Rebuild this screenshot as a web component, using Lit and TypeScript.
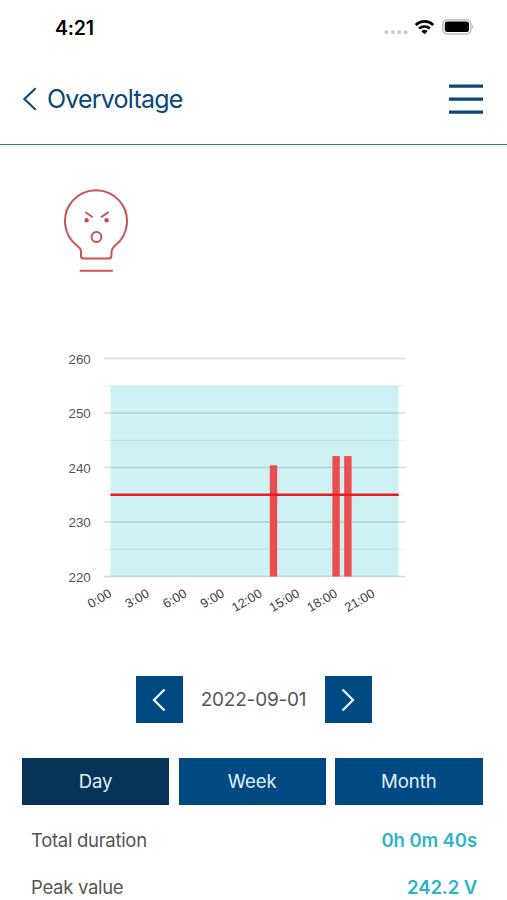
import { LitElement, html, svg, css } from "lit";
import { customElement, state } from "lit/decorators.js";
import { classMap } from "lit/directives/class-map.js";

const yOf = (v: number) => 18.5 + (260 - v) * 5.45;

@customElement("status-bar")
class StatusBar extends LitElement {
  static styles = css`
    :host { display: flex; flex: none; height: 54px; box-sizing: border-box; justify-content: space-between; align-items: center; padding: 0 32px 0 55px; }
    .time { font-size: 19.5px; font-weight: 600; line-height: 24px; letter-spacing: -0.2px; color: #000; padding-top: 1px; }
    svg { display: block; }
  `;
  render() {
    return html`
      <span class="time">4:21</span>
      <svg width="92" height="24" viewBox="0 0 92 24">
        <g fill="#cfcfcf">
          <rect x="1.5" y="15.2" width="4" height="4" rx="1.4" /><rect x="8" y="15.2" width="4" height="4" rx="1.4" />
          <rect x="14.2" y="15.2" width="4" height="4" rx="1.4" /><rect x="20.6" y="15.2" width="4" height="4" rx="1.4" />
        </g>
        <g fill="none" stroke="#000" stroke-width="2.7">
          <path d="M32.7 9.9a13 13 0 0 1 17.6 0" />
          <path d="M36.1 13.6a8 8 0 0 1 10.8 0" />
        </g>
        <path d="M38.4 16.2a4.6 4.6 0 0 1 6.2 0L41.5 19.2z" fill="#000" />
        <rect x="59.8" y="4.7" width="28.2" height="14.2" rx="4.5" fill="#fff" stroke="#bcbcbc" stroke-width="1.5" />
        <rect x="61.8" y="6.5" width="24.2" height="10.6" rx="2.4" fill="#000" />
        <path d="M89.3 9.8q2 2 0 4z" fill="#aaa" />
      </svg>
    `;
  }
}

@customElement("voltage-chart")
class VoltageChart extends LitElement {
  static styles = css`
    :host { display: block; flex: none; }
    svg { display: block; font-family: "Liberation Sans", Arial, sans-serif; font-size: 13.4px; fill: #555; }
    .hour { font-size: 12.9px; fill: #3c3c3c; }
  `;
  render() {
    const hours = ["0:00", "3:00", "6:00", "9:00", "12:00", "15:00", "18:00", "21:00"];
    const bars = [
      { x: 269.8, v: 240.4 },
      { x: 332.4, v: 242.1 },
      { x: 344.2, v: 242.1 },
    ];
    return html`
      <svg width="507" height="280" viewBox="0 0 507 280">
        <rect x="110.5" y=${yOf(255)} width="288.2" height=${yOf(220) - yOf(255)} fill="#cef1f3" />
        ${[260, 250, 240, 230, 220].map(
          (v) => svg`
            <line x1="104" x2="405.5" y1=${yOf(v)} y2=${yOf(v)} stroke="#000" stroke-opacity="0.14" stroke-width="1.7" />
            <text x="90.8" y=${yOf(v) + 5} text-anchor="end">${v}</text>`
        )}
        ${[255, 245, 235, 225].map(
          (v) => svg`<line x1="104" x2="405.5" y1=${yOf(v)} y2=${yOf(v)} stroke="#000" stroke-opacity="0.07" stroke-width="1.2" />`
        )}
        ${bars.map((b) => svg`<rect x=${b.x} y=${yOf(b.v)} width="7.4" height=${yOf(220) - yOf(b.v)} fill="#e94d4e" />`)}
        <line x1="110.5" x2="398.7" y1=${yOf(235)} y2=${yOf(235)} stroke="#e81c20" stroke-width="2.6" />
        ${hours.map((h, i) => svg`<text class="hour" text-anchor="end" transform="translate(${112.5 + i * 37.6} 256) rotate(-30)">${h}</text>`)}
      </svg>
    `;
  }
}

@customElement("app-root")
class AppRoot extends LitElement {
  @state() private period = "Day";

  static styles = css`
    :host { display: flex; flex-direction: column; height: 900px; overflow: hidden; background: #fff; font-family: Inter, "Liberation Sans", sans-serif; color: #555; }
    header, .mood, .picker, .tabs, .rows { flex: none; }
    header { display: flex; height: 91px; box-sizing: border-box; align-items: center; justify-content: space-between; padding: 0 24px 0 22px; border-bottom: 1px solid #3b6d96; color: #0b4679; }
    svg { display: block; }
    .back { display: flex; align-items: center; gap: 9px; }
    .title { font-size: 25px; line-height: 32px; letter-spacing: -0.8px; }
    .mood { padding: 35px 0 0 54px; height: 160px; }
    .picker { display: flex; justify-content: center; align-items: center; gap: 18px; margin-top: 56px; }
    .step { display: grid; place-items: center; width: 47px; height: 47px; padding: 0; border: 0; background: #004a83; }
    .date { width: 106px; text-align: center; white-space: nowrap; font-size: 19px; letter-spacing: -0.2px; }
    .tabs { display: grid; grid-template-columns: repeat(3, 1fr); gap: 9.5px; margin: 34.5px 24.5px 0 22px; }
    .tab { height: 47.5px; border: 0; padding: 0; font: 400 18.5px Inter, sans-serif; color: #e3f1fc; background: #004a83; }
    .tab.on { background: #063458; }
    .row { display: flex; justify-content: space-between; align-items: center; height: 46.5px; padding: 0 30px 0 31px; font-size: 18.5px; }
    .rows { margin-top: 12px; }
    .label { letter-spacing: -0.3px; }
    .value { color: #2bb5c6; font-weight: 600; letter-spacing: -0.1px; }
  `;

  render() {
    return html`
      <status-bar></status-bar>
      <header>
        <div class="back">
          <svg width="16" height="26" viewBox="0 0 16 26"><path d="M13.6 2.2L2.4 13l11.2 10.8" fill="none" stroke="currentColor" stroke-width="2.1" /></svg>
          <span class="title">Overvoltage</span>
        </div>
        <svg width="34" height="32" viewBox="0 0 34 32"><path d="M0 3.2h34M0 16.2h34M0 29.1h34" stroke="currentColor" stroke-width="3.2" /></svg>
      </header>
      <div class="mood">
        <svg width="84" height="100" viewBox="0 0 84 100" fill="none" stroke="#ca5354" stroke-width="2" stroke-linecap="round" stroke-linejoin="round">
          <path d="M27 76.5V71.5Q27 68.5 23.7 66.2A31 31 0 1 1 60.3 66.2Q57.5 68.7 57.5 71.5V75.5Q57.5 78.6 54.5 78.6H29.8Q27 78.6 27 76.5Z" />
          <path d="M26.5 90.8H58" />
          <path d="M32 32.5L38 36.8M54 32.5L47.5 36.8" />
          <circle cx="42.5" cy="57" r="4.9" />
          <g fill="#c74a4c" stroke="none"><circle cx="32.6" cy="40.3" r="2.2" /><circle cx="52.6" cy="40.3" r="2.2" /></g>
        </svg>
      </div>
      <voltage-chart></voltage-chart>
      <div class="picker">
        <button class="step" aria-label="Previous"><svg width="16" height="26" viewBox="0 0 16 26"><path d="M13.5 2.5L3 13l10.5 10.5" fill="none" stroke="#e7f5ff" stroke-width="2.3" /></svg></button>
        <span class="date">2022-09-01</span>
        <button class="step" aria-label="Next"><svg width="16" height="26" viewBox="0 0 16 26"><path d="M2.5 2.5L13 13L2.5 23.5" fill="none" stroke="#e7f5ff" stroke-width="2.3" /></svg></button>
      </div>
      <div class="tabs">
        ${["Day", "Week", "Month"].map(
          (p) => html`<button class=${classMap({ tab: true, on: p === this.period })} @click=${() => (this.period = p)}>${p}</button>`
        )}
      </div>
      <div class="rows">
        <div class="row"><span class="label">Total duration</span><span class="value">0h 0m 40s</span></div>
        <div class="row"><span class="label">Peak value</span><span class="value">242.2 V</span></div>
      </div>
    `;
  }
}
